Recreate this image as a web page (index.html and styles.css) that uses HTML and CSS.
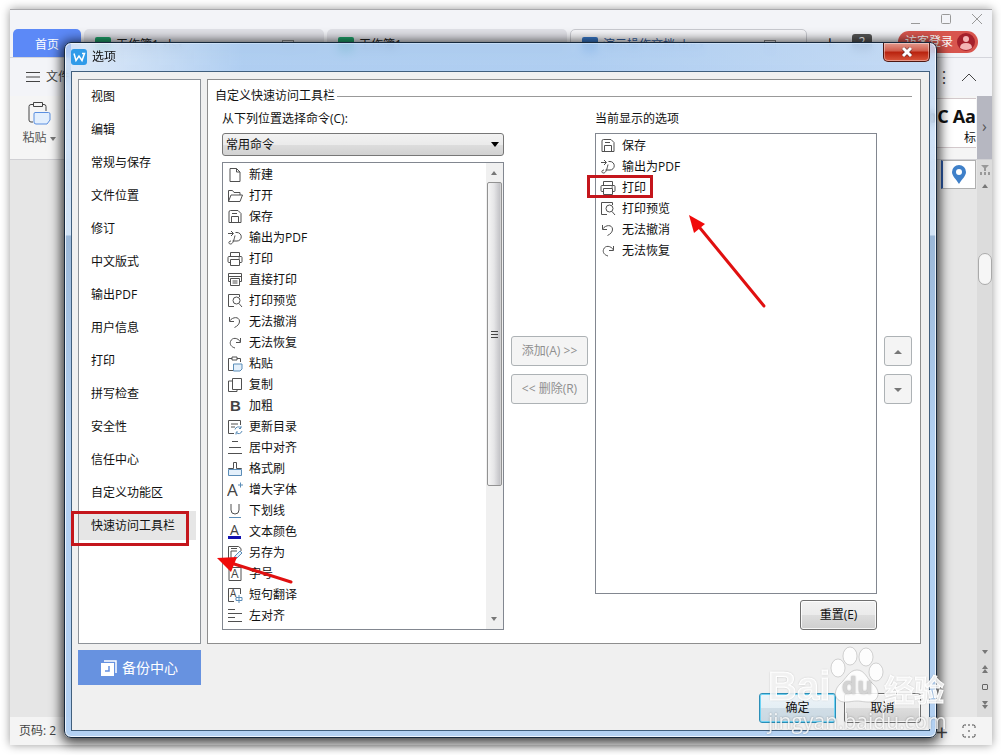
FILE: index.html
```html
<!DOCTYPE html>
<html lang="zh-CN">
<head>
    <meta charset="UTF-8">
    <meta name="viewport" content="width=device-width, initial-scale=1.0">
    <title>选项</title>
    <link rel="stylesheet" href="styles.css">
</head>
<body>
    <!-- icons used in both command lists -->
    <svg class="icon-defs" aria-hidden="true">
        <symbol id="i-save" viewBox="0 0 16 16"><path d="M2 3q0-1.500 1.500-1.500H11l3 3v9H2z"/><path d="M4.500 13.500V7.500h7v6M5 4.500h5"/></symbol>
        <symbol id="i-pdf" viewBox="0 0 16 16"><path d="M1 3.500h5M4 1l2.500 2.500L4 6M8.500 2.500h1.500a4 4 0 0 1 0 8.500H5.500M8 5.500C7 10 6 14 3.500 14S1.500 11 4 11"/></symbol>
        <symbol id="i-print" viewBox="0 0 16 16"><path d="M3.500 5V1.500h9V5M3.500 11.500h-1.500q-1 0-1-1v-4q0-1 1-1h12q1 0 1 1v4q0 1-1 1h-1.500"/><path d="M3.500 8.500h9v6h-9zM11.500 7h1.500"/></symbol>
        <symbol id="i-preview" viewBox="0 0 16 16"><path d="M7 13.500H1.500v-12h11V4"/><circle cx="9.500" cy="7.500" r="3.500"/><path d="M12 10.500l3 3.500"/></symbol>
        <symbol id="i-undo" viewBox="0 0 16 16"><path d="M2.500 3v4.500h4.500M2.500 7C6 2.500 12 2.500 12.500 7c.2 3-2 5-5 6.500"/></symbol>
        <symbol id="i-redo" viewBox="0 0 16 16"><path d="M13.500 3v4.500H9M13.500 7C11 2.500 5 2 3.500 6.500c-1 3 1 5.500 4.500 6.500"/></symbol>
    </svg>

    <div class="app">
        <div class="window-bar">
            <svg width="74" height="14" viewBox="0 0 74 14" aria-hidden="true"><path d="M1 11.500h9M31.500 3.500q0-1 1-1h7q1 0 1 1v7q0 1-1 1h-7q-1 0-1-1zM62 2l10 10M72 2L62 12"/></svg>
        </div>
        <div class="tabs">
            <a class="tab tab-home" href="#">首页</a>
            <a class="tab" href="#"><i class="doc green"></i>工作簿1.xlsx<i class="box"></i></a>
            <a class="tab" href="#"><i class="doc green"></i>工作簿1</a>
            <a class="tab active" href="#"><i class="doc blue-doc"></i>演示操作文档.docx<i class="box"></i></a>
            <div class="tab-tools">
                <span class="plus">+</span>
                <span class="count">2</span>
                <button class="login">访客登录
                    <svg width="18" height="18" viewBox="0 0 18 18" aria-hidden="true"><circle cx="9" cy="9" r="9" fill="#a5202b"/><circle cx="9" cy="6" r="3" fill="#f3b4b4"/><path d="M3 15q0-5 6-5t6 5q-6 4-12 0z" fill="#f3b4b4"/></svg>
                </button>
            </div>
        </div>
        <div class="menu">
            <svg width="14" height="10" viewBox="0 0 14 10" aria-hidden="true"><path d="M0 .5h14M0 5h14M0 9.500h14"/></svg>
            <span class="menu-file">文件</span>
            <span class="dots">⋮</span>
            <svg width="16" height="10" viewBox="0 0 16 10" aria-hidden="true"><path d="M1 9l7-7 7 7"/></svg>
        </div>
        <div class="ribbon">
            <button class="paste">
                <svg width="24" height="24" viewBox="0 0 24 24" aria-hidden="true"><path d="M6 3.500H4q-2 0-2 2V19q0 2 2 2h2M15 3.500h2q2 0 2 2V10M6.500 1.500h9v4h-9z"/><path d="M8 11.500h13.500q1.500 0 1.500 1.500v6l-3 4H9q-2 0-2-2v-8q0-1.500 1-1.500z" stroke="#5b8fe0" fill="#e3effd"/></svg>
                <span>粘贴 <i class="tri down"></i></span>
            </button>
            <div class="gallery">
                <div class="style">AaBbC<small>正文</small></div>
                <div class="style last">Aa<small>标</small></div>
            </div>
            <div class="gallery-next">›</div>
        </div>
        <div class="workspace">
            <div class="pin">
                <svg width="16" height="19" viewBox="0 0 16 19" aria-hidden="true"><path d="M8 19C5 14 1 11 1 7a7 7 0 0 1 14 0c0 4-4 7-7 12z" fill="#3f80c9"/><circle cx="8" cy="7" r="3" fill="#fff"/></svg>
            </div>
            <div class="page-scroll">
                <svg width="10" height="10" viewBox="0 0 10 10" aria-hidden="true"><path d="M1 0h8L6 3v3H4V3zM0 7h2v3H0zM4 7h2v3H4zM8 7h2v3H8z" fill="#999"/></svg>
                <i class="tri up"></i>
                <i class="page-thumb"></i>
                <i class="tri down push"></i>
                <span><i class="tri up"></i><i class="tri up"></i></span>
                <i class="target"></i>
                <span><i class="tri down"></i><i class="tri down"></i></span>
            </div>
        </div>
        <div class="status">
            <span>页码: 2</span>
            <span class="zoom-in">+</span>
            <svg width="14" height="14" viewBox="0 0 14 14" aria-hidden="true"><path d="M1 4V2.500Q1 1 2.500 1H4M10 1h1.500Q13 1 13 2.500V4M13 10v1.500q0 1.500-1.500 1.500H10M4 13H2.500Q1 13 1 11.500V10M6 7h2M6 1h2M6 13h2"/></svg>
        </div>
    </div>

    <div class="dialog" role="dialog" aria-labelledby="dialogTitle">
        <div class="dialog-title">
            <svg width="16" height="16" viewBox="0 0 16 16" aria-hidden="true"><rect width="16" height="16" rx="3" fill="#2f9be9"/><path d="M3 4.500l2 7 3-4.500 3 4.500 2.500-7H11" fill="none" stroke="#fff" stroke-width="1.500"/></svg>
            <h1 id="dialogTitle">选项</h1>
            <button class="close" aria-label="关闭">
                <svg width="12" height="10" viewBox="0 0 12 10" aria-hidden="true"><path d="M2 1l8 8M10 1L2 9" stroke="#5a2020" stroke-width="4"/><path d="M2 1l8 8M10 1L2 9" stroke="#fff" stroke-width="3"/></svg>
            </button>
        </div>
        <div class="client">
            <div class="client-main">
                <div class="side">
                    <nav class="side-nav">
                        <a href="#">视图</a>
                        <a href="#">编辑</a>
                        <a href="#">常规与保存</a>
                        <a href="#">文件位置</a>
                        <a href="#">修订</a>
                        <a href="#">中文版式</a>
                        <a href="#">输出PDF</a>
                        <a href="#">用户信息</a>
                        <a href="#">打印</a>
                        <a href="#">拼写检查</a>
                        <a href="#">安全性</a>
                        <a href="#">信任中心</a>
                        <a href="#">自定义功能区</a>
                        <a href="#" class="selected">快速访问工具栏<i class="mark mark-side"></i></a>
                    </nav>
                </div>
                <section class="panel">
                    <h2>自定义快速访问工具栏</h2>
                    <div class="picker">
                        <div class="column">
                            <label for="source">从下列位置选择命令(C):</label>
                            <div class="select">
                                <select id="source"><option>常用命令</option></select>
                            </div>
                            <div class="list source-list">
                                <ul>
                                    <li><svg viewBox="0 0 16 16"><path d="M3 1.500h6.500l3.500 3.500v9.500H3z"/><path d="M9.500 1.500v3.500H13"/></svg>新建</li>
                                    <li><svg viewBox="0 0 16 16"><path d="M1.500 13.500v-11h4l1.500 2h6v2.500M1.500 13.500l2.500-6.500h11.500l-2.500 6.500z"/></svg>打开</li>
                                    <li><svg><use href="#i-save"/></svg>保存</li>
                                    <li><svg><use href="#i-pdf"/></svg>输出为PDF</li>
                                    <li><svg><use href="#i-print"/></svg>打印</li>
                                    <li><svg viewBox="0 0 16 16"><path d="M3.500 9.500h-2v-8h13v8h-2M2 4.500h12"/><path d="M3.500 6.500h9v7h-9zM5.500 9h5M5.500 11h5"/></svg>直接打印</li>
                                    <li><svg><use href="#i-preview"/></svg>打印预览</li>
                                    <li><svg><use href="#i-undo"/></svg>无法撤消</li>
                                    <li><svg><use href="#i-redo"/></svg>无法恢复</li>
                                    <li><svg viewBox="0 0 16 16"><path d="M5 2.500H1.500v12H6M10 2.500h3.500V6M5 1h5v3H5z"/><path class="blue soft" d="M6.500 8h8.500v5l-2 2H6.500z"/></svg>粘贴</li>
                                    <li><svg viewBox="0 0 16 16"><path d="M5.500 1.500h9v11h-9z"/><path d="M5.500 4H1.500v10.500H10v-2"/></svg>复制</li>
                                    <li><svg viewBox="0 0 16 16"><text class="heavy" x="3" y="13">B</text></svg>加粗</li>
                                    <li><svg viewBox="0 0 16 16"><path d="M7 14.500H1.500v-13h12V6M4 5h7M4 8h4"/><path class="blue" d="M8 10.500a3.500 3.500 0 0 1 6-1.500V7M14 9.500h-2M15 12a3.500 3.500 0 0 1-6 1.500V15.500M9 13h2"/></svg>更新目录</li>
                                    <li><svg viewBox="0 0 16 16"><path d="M5 1.500h6M2 7.500h12M1 13.500h14"/></svg>居中对齐</li>
                                    <li><svg viewBox="0 0 16 16"><path d="M1.500 8v-.5h5v-6h3v6h5V8"/><path class="blue soft" d="M1.500 8.500h13v6h-13z"/></svg>格式刷</li>
                                    <li><svg viewBox="0 0 16 16"><text x="0" y="14" font-size="17">A</text><path class="blue" d="M11 3h5M13.500.5v5"/></svg>增大字体</li>
                                    <li><svg viewBox="0 0 16 16"><path d="M4 1v6a4 4 0 0 0 8 0V1"/><path class="blue" d="M2 14.500h12"/></svg>下划线</li>
                                    <li><svg viewBox="0 0 16 16"><text x="3" y="11" font-size="14">A</text><path class="ink" d="M1 13.500h13"/></svg>文本颜色</li>
                                    <li><svg viewBox="0 0 16 16"><path d="M7 14.500H1.500v-13h10l2.500 2V6M4 14V6h6M4 3.500h6"/><path class="blue soft" d="M7 14l1-3 5-5 2 2-5 5z"/></svg>另存为</li>
                                    <li><svg viewBox="0 0 16 16"><path d="M2 1.500h12v13H2z"/><text x="4" y="12" font-size="12">A</text></svg>字号</li>
                                    <li><svg viewBox="0 0 16 16"><path d="M7 14.500H1.500v-13h12V7"/><text x="3" y="10" font-size="10">A</text><path class="blue" d="M9 10.500h6v3H9zM12 8v8"/></svg>短句翻译</li>
                                    <li><svg viewBox="0 0 16 16"><path d="M1 1.500h7M1 5.500h14M1 9.500h7M1 13.500h14"/></svg>左对齐</li>
                                </ul>
                                <div class="scrollbar">
                                    <i class="tri up"></i>
                                    <div class="thumb"><i></i><i></i><i></i></div>
                                    <i class="tri down"></i>
                                </div>
                                <svg class="arrow arrow-source" viewBox="0 0 76 30" aria-hidden="true"><path d="M74 26L14 7" stroke="#e01010" stroke-width="3" stroke-linecap="round"/><path d="M0 2l20-1-6 15z" fill="#f00a0a"/></svg>
                            </div>
                        </div>
                        <div class="buttons">
                            <button disabled>添加(A) &gt;&gt;</button>
                            <button disabled>&lt;&lt; 删除(R)</button>
                        </div>
                        <div class="column">
                            <span class="label" id="currentLabel">当前显示的选项</span>
                            <div class="list">
                                <ul aria-labelledby="currentLabel">
                                    <li><svg><use href="#i-save"/></svg>保存</li>
                                    <li><svg><use href="#i-pdf"/></svg>输出为PDF</li>
                                    <li><svg><use href="#i-print"/></svg>打印<i class="mark mark-print"></i></li>
                                    <li><svg><use href="#i-preview"/></svg>打印预览</li>
                                    <li><svg><use href="#i-undo"/></svg>无法撤消</li>
                                    <li><svg><use href="#i-redo"/></svg>无法恢复</li>
                                </ul>
                                <svg class="arrow arrow-current" viewBox="0 0 80 96" aria-hidden="true"><path d="M76 92L12 14" stroke="#e01010" stroke-width="3" stroke-linecap="round"/><path d="M1 1l16 9-11 9z" fill="#f00a0a"/></svg>
                            </div>
                            <button class="btn reset">重置(E)</button>
                        </div>
                        <div class="buttons">
                            <button disabled aria-label="上移"><i class="tri up"></i></button>
                            <button disabled aria-label="下移"><i class="tri down"></i></button>
                        </div>
                    </div>
                </section>
            </div>
            <div class="client-footer">
                <button class="backup">
                    <svg width="16" height="16" viewBox="0 0 16 16" aria-hidden="true"><path d="M3 1h12v12" fill="none" stroke="#fff" stroke-width="1.500"/><path d="M0 3h13v13H0z" fill="#fff"/><path d="M8 6v5H4" fill="none" stroke="#6590df" stroke-width="1.500"/></svg>
                    备份中心
                </button>
                <div class="actions">
                    <button class="btn primary">确定</button>
                    <button class="btn">取消</button>
                </div>
            </div>
        </div>
    </div>

    <div class="watermark">
        <div class="logo">
            <span class="bai">Bai</span>
            <span class="paw">
                <svg width="54" height="58" viewBox="0 0 54 58" aria-hidden="true"><ellipse cx="8" cy="22" rx="7" ry="9"/><ellipse cx="20" cy="10" rx="7" ry="9"/><ellipse cx="36" cy="11" rx="7" ry="9"/><ellipse cx="46" cy="26" rx="7" ry="9"/><path d="M27 24c8 0 10 9 16 14 9 8 5 18-4 18-6 0-8-1-12-1s-7 1-12 1C5 56 2 46 10 38c6-5 9-14 17-14z"/></svg>
                <b>du</b>
            </span>
            <span class="jy">经验</span>
        </div>
        <div class="site">jingyan.baidu.com</div>
    </div>
</body>
</html>
```

FILE: styles.css
```css
* {
    box-sizing: border-box;
}
body {
    margin: 0;
    min-height: 100vh;
    padding: 9px 9px 10px 10px;
    display: flex;
    position: relative;
    overflow: hidden;
    background-color: #fff;
    font-family: "Open Sans", "Noto Sans CJK SC", sans-serif;
    font-size: 12px;
    line-height: 16px;
    color: #111;
}
button, select {
    font: inherit;
    color: inherit;
}
a {
    color: inherit;
    text-decoration: none;
}
.icon-defs {
    position: absolute;
    width: 0;
    height: 0;
}

/* small triangles used on scrollbars and buttons */
.tri {
    display: inline-block;
    flex: none;
    border: 3px solid transparent;
}
.tri.up {
    border-top: 0;
    border-bottom: 4px solid #777;
}
.tri.down {
    border-bottom: 0;
    border-top: 4px solid #777;
}

/* main window behind the dialog */
.app {
    flex: 1;
    display: flex;
    flex-direction: column;
    border-top: 1px solid #a9a9ac;
    background-color: #f3f4f8;
    box-shadow: 0 0 9px rgba(0,0,0,0.4);
}
.app svg {
    fill: none;
    stroke: #444;
}
.window-bar {
    height: 19px;
    padding: 2px 8px 0 0;
    display: flex;
    justify-content: flex-end;
}
.app .window-bar svg {
    stroke: #999;
}
.tabs {
    display: flex;
    gap: 3px;
    height: 29px;
    padding-left: 3px;
    border-bottom: 1px solid #d4d5dc;
}
.tab {
    flex: 0 0 240px;
    display: flex;
    align-items: center;
    gap: 5px;
    height: 28px;
    padding: 3px 30px 0 11px;
    border-radius: 5px 5px 0 0;
    background-color: #e0e1e7;
    color: #222;
}
.tab.active {
    flex-basis: 237px;
    border: 1px solid #c9cad0;
    background-color: #f6f6f9;
    color: #35609f;
}
.tab-home {
    flex-basis: 68px;
    padding: 3px 0 0;
    justify-content: center;
    background-color: #5c89f7;
    color: #fff;
}
.doc {
    width: 16px;
    height: 16px;
    border-radius: 2px;
}
.green {
    background-color: #1f9f68;
}
.blue-doc {
    background-color: #3978c8;
}
.box {
    width: 12px;
    height: 9px;
    margin-left: auto;
    border: 1px solid #888;
}
.tab-tools {
    flex: 1;
    display: flex;
    align-items: center;
    justify-content: flex-end;
    padding: 0 14px 3px 0;
}
.plus {
    margin-right: 17px;
    font-size: 18px;
}
.count {
    width: 20px;
    margin-right: 26px;
    border-radius: 3px;
    background-color: #555;
    color: #fff;
    text-align: center;
}
.login {
    display: flex;
    align-items: center;
    justify-content: flex-end;
    gap: 4px;
    width: 80px;
    height: 22px;
    padding: 0 3px;
    border: 0;
    border-radius: 11px;
    background-color: #d8554e;
    color: #fff;
    white-space: nowrap;
}
.login svg {
    stroke: none;
    flex: none;
}
.menu {
    display: flex;
    align-items: center;
    height: 38px;
    padding: 0 15px 0 16px;
    color: #444;
}
.menu-file {
    margin-left: 6px;
}
.dots {
    margin-left: auto;
    margin-right: 9px;
    font-size: 16px;
}
.ribbon {
    display: flex;
    height: 64px;
    border-bottom: 1px solid #d0d0d4;
    background-color: #f5f5f5;
}
.paste {
    display: flex;
    flex-direction: column;
    align-items: center;
    gap: 5px;
    width: 58px;
    padding: 5px 0 0;
    border: 0;
    background: none;
    color: #555;
}
.paste .tri {
    vertical-align: middle;
}
.gallery {
    display: flex;
    justify-content: flex-end;
    gap: 4px;
    height: 50px;
    margin: 2px 1px 0 auto;
    border: solid #d3c9cc;
    border-width: 1px 0;
    background-color: #fff;
    overflow: hidden;
}
.style {
    padding-top: 6px;
    font-size: 18px;
    font-weight: bold;
    line-height: 22px;
}
.style.last {
    text-align: right;
}
.style small {
    display: block;
    font-size: 12px;
    font-weight: normal;
}
.gallery-next {
    width: 15px;
    background-color: #b6b7c1;
    color: #555;
    font-size: 16px;
    line-height: 60px;
    text-align: center;
}
.workspace {
    flex: 1;
    display: flex;
    justify-content: flex-end;
    background-color: #e6e6e6;
}
.pin {
    display: flex;
    align-items: center;
    justify-content: center;
    width: 35px;
    height: 29px;
    border: 1px solid #b0b0b0;
    border-left: 2px solid #2c5aa8;
    background-color: #fff;
}
.app .pin svg, .app .page-scroll svg {
    stroke: none;
}
.page-scroll {
    display: flex;
    flex-direction: column;
    align-items: center;
    width: 15px;
    margin-left: 1px;
    padding: 5px 0 8px;
    background-color: #dcdcdc;
}
.page-scroll > .up {
    margin-top: 9px;
}
.page-thumb {
    width: 14px;
    height: 32px;
    margin-top: 65px;
    border: 1px solid #aaa;
    border-radius: 7px;
    background-color: #f6f6f6;
}
.push {
    margin-top: auto;
}
.page-scroll span {
    display: flex;
    flex-direction: column;
    margin: 11px 0;
}
.page-scroll span:last-child {
    margin-bottom: 0;
}
.target {
    width: 6px;
    height: 6px;
    border: 1px solid #666;
    border-radius: 1px;
}
.status {
    display: flex;
    align-items: center;
    height: 28px;
    padding: 0 16px 0 9px;
    background-color: #f4f4f4;
    color: #444;
}
.zoom-in {
    margin-left: auto;
    margin-right: 14px;
    font-size: 22px;
}

/* dialog with glass frame */
.dialog {
    position: absolute;
    top: 42px;
    right: 64px;
    bottom: 17px;
    left: 64px;
    display: flex;
    flex-direction: column;
    padding: 0 6px 6px;
    border: 1px solid #16283c;
    border-radius: 7px;
    background: linear-gradient(rgba(190,214,242,0.8), rgba(205,226,248,0.85) 192px, rgba(146,178,214,0.9) 193px, rgba(172,205,242,0.9) 400px);
    backdrop-filter: blur(4px);
    box-shadow: inset 0 0 0 1px rgba(255,255,255,0.75), 0 2px 12px 3px rgba(0,0,0,0.75);
}
.dialog-title {
    display: flex;
    align-items: center;
    height: 28px;
    background: linear-gradient(90deg, rgba(235,242,250,0.6), rgba(150,192,238,0.5) 20%, rgba(150,192,238,0.5) 60%, rgba(190,215,244,0.5));
}
.dialog-title h1 {
    margin: 0 0 0 5px;
    font-size: 12px;
    font-weight: normal;
}
.close {
    align-self: flex-start;
    display: flex;
    align-items: center;
    justify-content: center;
    width: 47px;
    height: 19px;
    margin-left: auto;
    padding: 0;
    border: 1px solid #4d1712;
    border-top: 0;
    border-radius: 0 0 5px 5px;
    background: linear-gradient(#e39a8e, #cf5a49 45%, #b8210d 50%, #d9563c);
    box-shadow: inset 0 0 0 1px rgba(255,255,255,0.4);
}
.client {
    flex: 1;
    display: flex;
    flex-direction: column;
    padding: 7px 8px 7px 6px;
    border: 1px solid #415f7d;
    background-color: #f0f0f0;
}
.client-main {
    flex: 1;
    display: flex;
    gap: 6px;
}
.side {
    width: 123px;
    border: 1px solid #8e9399;
    background-color: #fff;
}
.side-nav a {
    display: block;
    position: relative;
    margin: 2px 4px 4px 0;
    padding: 7px 0 6px 12px;
    line-height: 16px;
    white-space: nowrap;
}
.side-nav .selected {
    background-color: #e6e6e6;
}
.panel {
    flex: 1;
    display: flex;
    flex-direction: column;
    padding: 8px 8px 13px 7px;
    border: 1px solid #8e8e8e;
    background-color: #fff;
}
.panel h2 {
    display: flex;
    align-items: center;
    gap: 2px;
    margin: 0;
    font-size: 12px;
    font-weight: normal;
}
.panel h2::after {
    content: "";
    flex: 1;
    border-top: 1px solid #999;
}
.picker {
    flex: 1;
    display: grid;
    grid-template-columns: 1fr 77px 1fr 28px;
    gap: 7px;
    padding: 6px 0 0 7px;
}
.column {
    display: flex;
    flex-direction: column;
    gap: 6px;
}
.column label, .label {
    line-height: 17px;
}
.select {
    position: relative;
}
.select::after {
    content: "";
    position: absolute;
    top: 9px;
    right: 5px;
    border: 4px solid transparent;
    border-top: 5px solid #000;
    border-bottom: 0;
}
.select select {
    appearance: none;
    display: block;
    width: 100%;
    height: 23px;
    padding: 0 3px;
    border: 1px solid #777;
    border-radius: 3px;
    background: linear-gradient(#f2f2f2, #ebebeb 50%, #dddddd 51%, #d2d2d2);
}
.list {
    flex: 1;
    position: relative;
    display: flex;
    border: 1px solid #828790;
    background-color: #fff;
}
.list ul {
    flex: 1;
    margin: 0;
    padding: 1px 0 0;
    list-style: none;
}
.list li {
    position: relative;
    display: flex;
    align-items: center;
    gap: 6px;
    height: 21px;
    padding-left: 4px;
    white-space: nowrap;
}
.list li svg {
    width: 16px;
    height: 16px;
    fill: none;
    stroke: #505050;
}
.list text {
    fill: #444;
    stroke: none;
}
.list .heavy {
    font-family: "Liberation Sans", sans-serif;
    font-size: 15px;
    font-weight: bold;
}
.list .blue {
    stroke: #5b8db8;
}
.list .soft {
    fill: #e4f0fb;
}
.list .ink {
    stroke: #1010b0;
    stroke-width: 3;
}
.scrollbar {
    display: flex;
    flex-direction: column;
    align-items: center;
    width: 17px;
    padding: 8px 1px 8px 0;
    background-color: #f0f0f0;
}
.thumb {
    display: flex;
    flex-direction: column;
    align-items: center;
    justify-content: center;
    gap: 2px;
    width: 15px;
    height: 304px;
    margin: 7px 0 auto;
    border: 1px solid #929292;
    border-radius: 2px;
    background: linear-gradient(90deg, #f5f5f5, #e6e6e8 45%, #c4c4c8 90%, #ddd);
}
.thumb i {
    width: 7px;
    border-top: 1px solid #444;
}
.buttons {
    display: flex;
    flex-direction: column;
    justify-content: center;
    gap: 8px;
}
.buttons button {
    height: 30px;
    padding: 0;
    border: 1px solid #adb2b5;
    border-radius: 3px;
    background-color: #f4f4f4;
    color: #8f8f8f;
    white-space: nowrap;
}
.buttons .tri {
    border-left-width: 4px;
    border-right-width: 4px;
    vertical-align: middle;
}
.btn {
    width: 77px;
    height: 30px;
    padding: 0;
    border: 1px solid #707070;
    border-radius: 3px;
    background: linear-gradient(#f2f2f2, #ebebeb 50%, #dddddd 51%, #cfcfcf);
    box-shadow: inset 0 0 0 1px rgba(255,255,255,0.8);
}
.btn.primary {
    border-color: #2c8fb8;
    box-shadow: inset 0 0 0 1px #6fd3f5;
    background: linear-gradient(#eef4f8, #e4eef4 50%, #d0dde6 51%, #c9d8e2);
}
.reset {
    align-self: flex-end;
}
.client-footer {
    display: flex;
    justify-content: space-between;
    padding-top: 6px;
}
.backup {
    display: flex;
    align-items: center;
    justify-content: center;
    gap: 5px;
    width: 123px;
    height: 35px;
    border: 0;
    background-color: #6792e0;
    color: #fff;
    font-size: 14px;
}
.actions {
    display: flex;
    gap: 8px;
    padding-top: 43px;
}

/* red callouts */
.mark {
    position: absolute;
    border: 3px solid #c4161c;
}
.mark-side {
    top: 0;
    left: -8px;
    width: 118px;
    height: 35px;
}
.mark-print {
    top: -2px;
    left: -9px;
    width: 66px;
    height: 23px;
}
.arrow {
    position: absolute;
    fill: none;
}
.arrow-source {
    left: -6px;
    bottom: 43px;
    width: 76px;
    height: 30px;
}
.arrow-current {
    top: 80px;
    left: 92px;
    width: 80px;
    height: 96px;
}

.watermark {
    position: absolute;
    right: 52px;
    bottom: 20px;
    width: 181px;
    color: rgba(255,255,255,0.85);
    text-shadow: 0 0 2px rgba(0,0,0,0.35);
    pointer-events: none;
}
.logo {
    display: flex;
    align-items: flex-end;
}
.bai {
    font-family: "Liberation Sans", sans-serif;
    font-size: 40px;
    font-weight: bold;
    line-height: 36px;
    -webkit-text-stroke: 1px #fff;
}
.paw {
    position: relative;
    height: 58px;
}
.paw svg {
    fill: rgba(255,255,255,0.85);
    stroke: rgba(170,170,170,0.5);
}
.paw b {
    position: absolute;
    right: 0;
    bottom: 7px;
    left: 0;
    color: #d3d3d3;
    font-size: 24px;
    line-height: 24px;
    text-align: center;
}
.jy {
    font-family: "Noto Sans CJK SC", sans-serif;
    font-size: 30px;
    font-weight: bold;
    line-height: 32px;
    -webkit-text-stroke: 1px #fff;
}
.site {
    margin-top: 3px;
    font-size: 21px;
    line-height: 28px;
    white-space: nowrap;
}
```
